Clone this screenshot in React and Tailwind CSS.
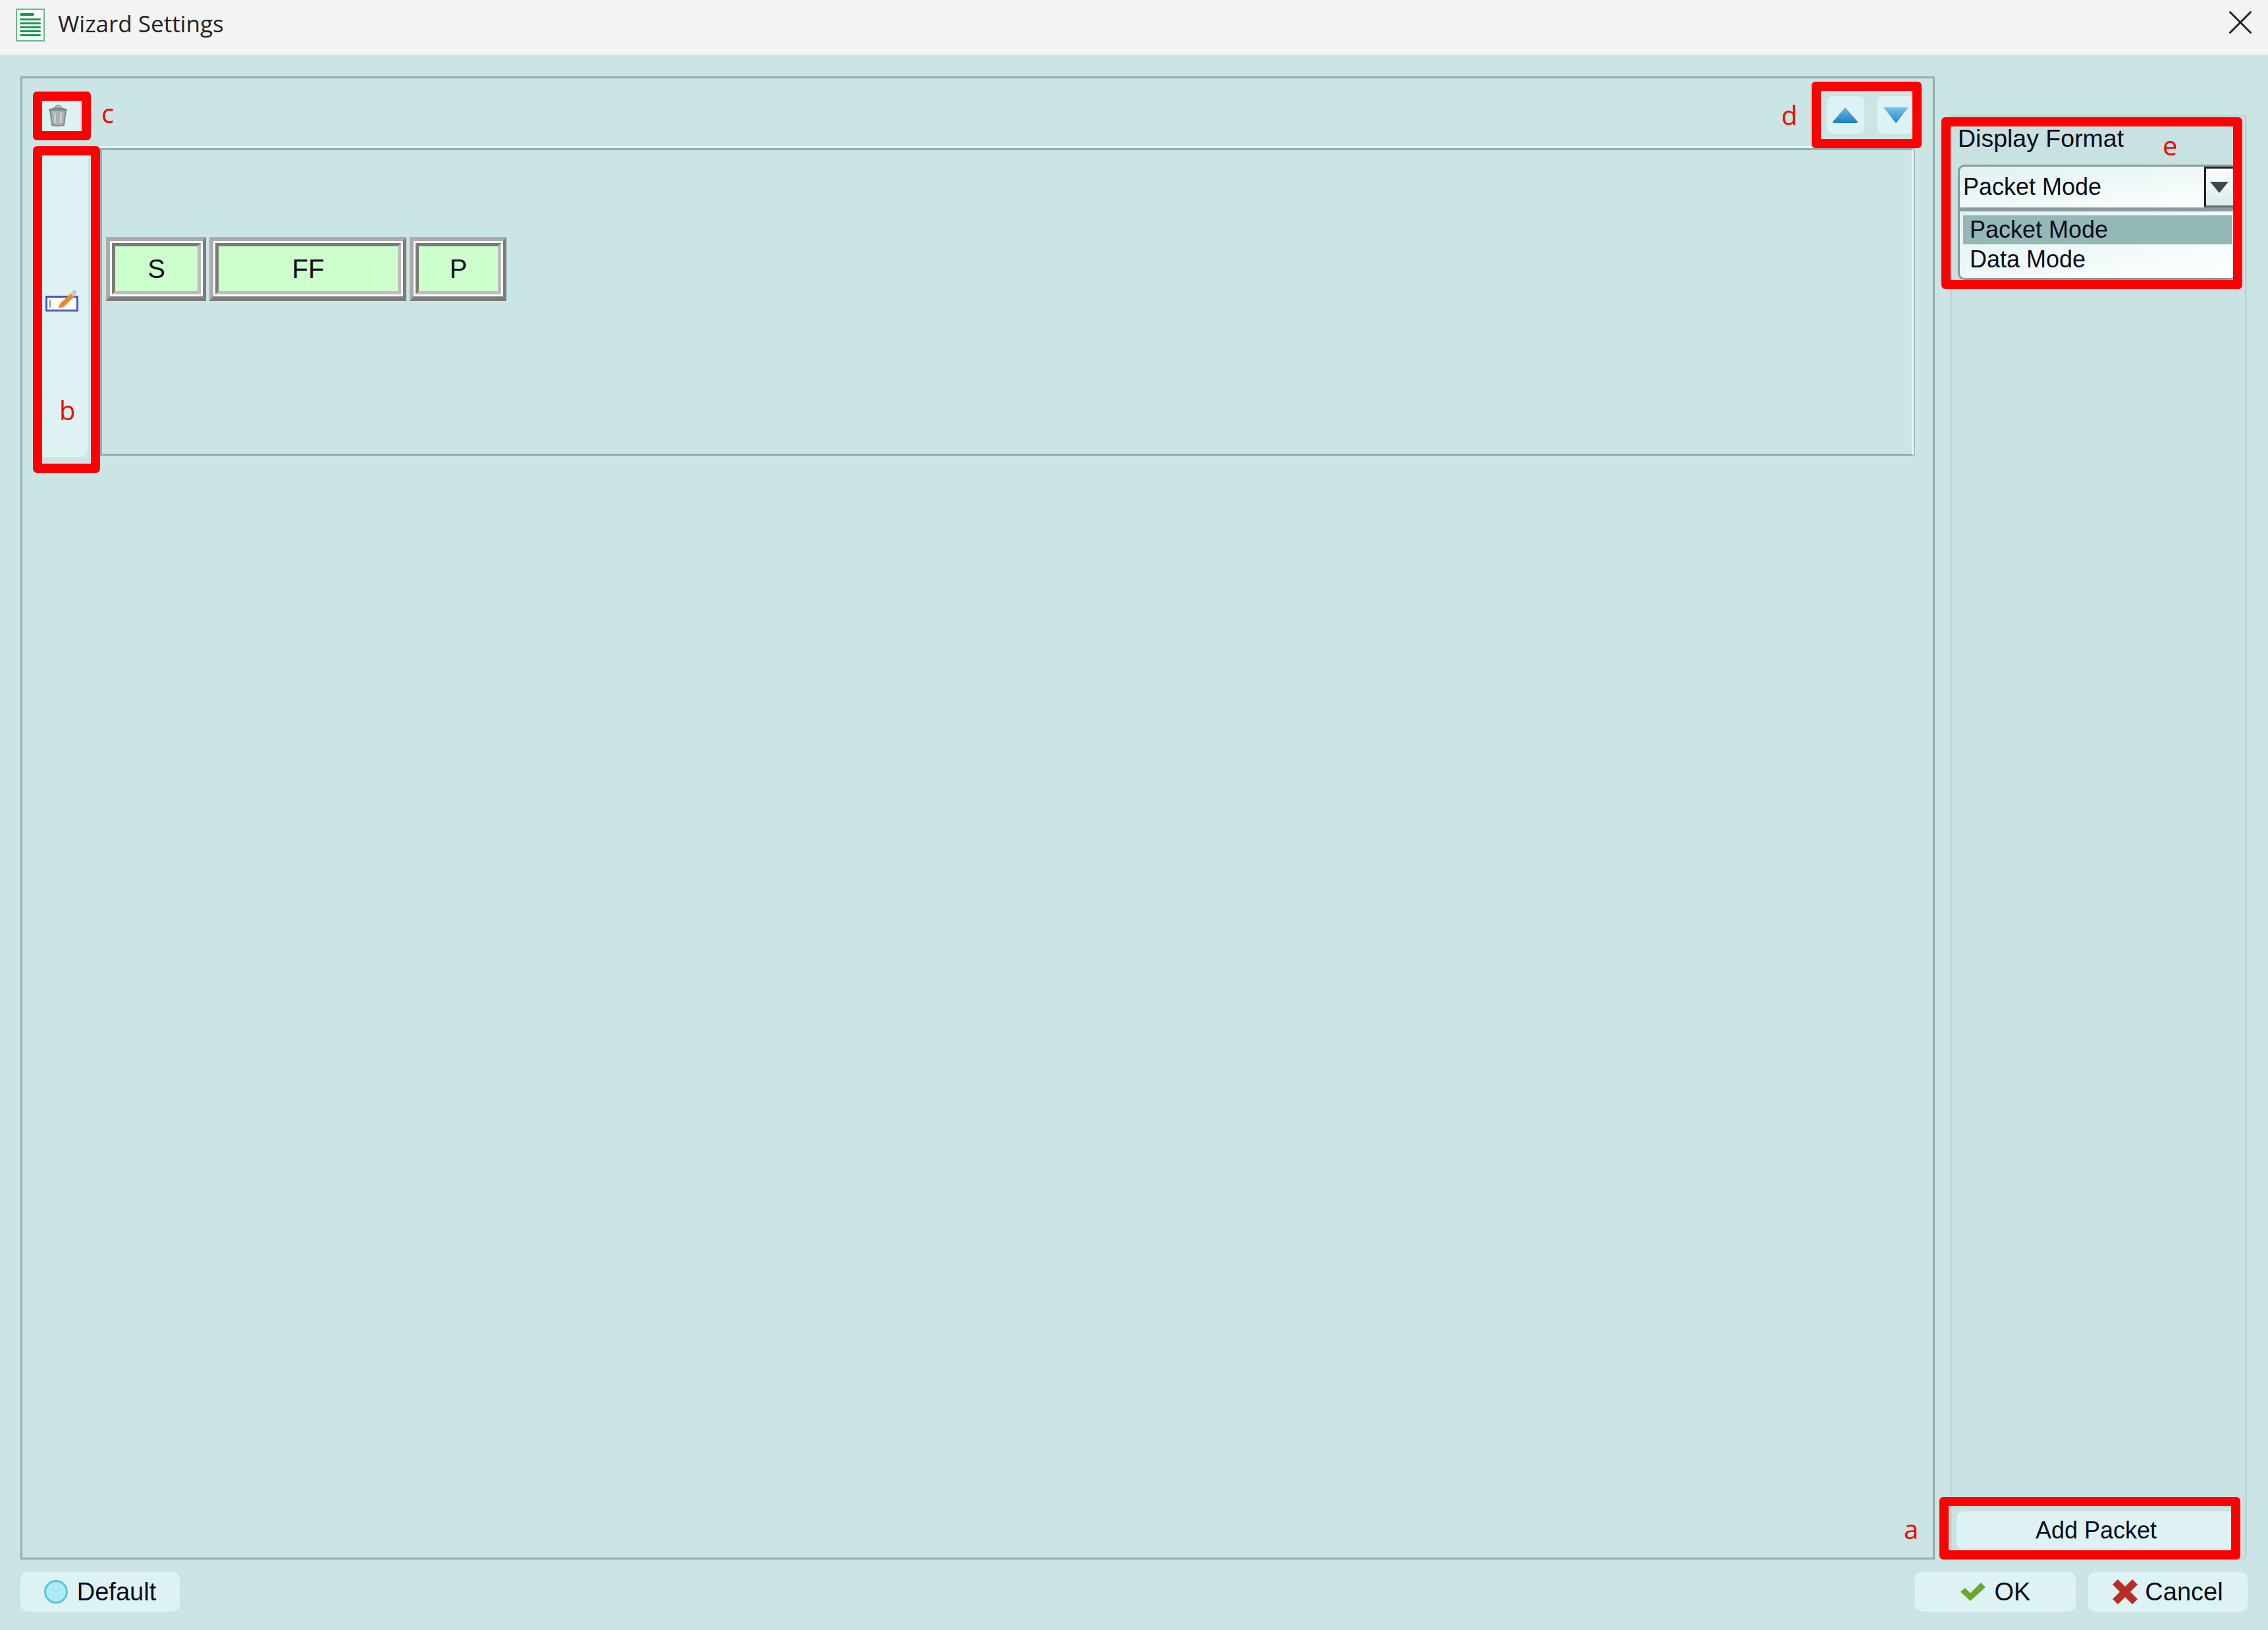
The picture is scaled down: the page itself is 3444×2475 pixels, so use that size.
import React from 'react';
import { X } from 'lucide-react';

const font = "font-['Liberation_Sans',Arial,sans-serif]";

// the app's flat pale button
const FlatButton = ({ className = '', children }) => (
  <div className={`flex items-center justify-center bg-[#def2f4] rounded-[10px] text-[#0b0b1a] ${className}`}>
    {children}
  </div>
);

const PacketCell = ({ label, width }) => (
  <div
    className="h-[97px] border-solid border-t-[6px] border-l-[6px] border-r-[5px] border-b-[7px] border-t-[#ababab] border-l-[#ababab] border-r-[#7d7d7d] border-b-[#7d7d7d]"
    style={{ width }}
  >
    <div className="h-full border-[3px] border-white">
      <div className="h-full flex items-center justify-center bg-[#ccffcc] border-[5px] border-t-[#7b7b7b] border-l-[#7b7b7b] border-r-[#bdbdbd] border-b-[#bdbdbd] text-[40px] text-[#0b0b1a]">
        {label}
      </div>
    </div>
  </div>
);

const Annotation = ({ className }) => (
  <div className={`absolute border-[14px] border-[#ff0000] rounded-[6px] ${className}`} />
);

const Letter = ({ className, children }) => (
  <span className={`absolute font-['Open_Sans',sans-serif] text-[40px] leading-none text-[#ff0000] ${className}`}>
    {children}
  </span>
);

const App = () => {
  return (
    <div className={`relative w-[3444px] h-[2475px] overflow-hidden flex flex-col bg-[#cbe5e5] ${font}`}>
      {/* title bar */}
      <div className="h-[83px] shrink-0 bg-[#f3f3f3] flex items-center pl-[24px] pr-[11px]">
        <svg width="44" height="50" viewBox="0 0 44 50" className="mb-[8px]">
          <rect x="1" y="1" width="42" height="48" fill="#fff" stroke="#62bd85" strokeWidth="2" />
          <rect x="6" y="7" width="22" height="4" rx="2" fill="#109a48" />
          <rect x="6" y="15" width="32" height="3" rx="1.5" fill="#109a48" />
          <rect x="6" y="21" width="32" height="3" rx="1.5" fill="#109a48" />
          <rect x="6" y="27" width="32" height="3" rx="1.5" fill="#109a48" />
          <rect x="6" y="33" width="32" height="3" rx="1.5" fill="#109a48" />
          <rect x="6" y="39" width="32" height="3" rx="1.5" fill="#109a48" />
        </svg>
        <span className="ml-[20px] mb-[10px] font-['Open_Sans',sans-serif] text-[35px] text-[#222]">Wizard Settings</span>
        <X className="ml-auto mb-[16px]" size={62} strokeWidth={3} color="#222" absoluteStrokeWidth />
      </div>

      <div className="flex-1 flex flex-col px-[31px]">
        <div className="flex mt-[33px] h-[2252px] gap-[23px]">
          {/* packet editor */}
          <div className="w-[2907px] border-[3px] border-[#93aeae] pl-[18px] pr-[18px] pt-[27px] flex flex-col">
            <div className="h-[57px] flex justify-between shrink-0">
              <FlatButton className="ml-[2px] w-[68px] h-full">
                <svg width="32" height="34" viewBox="0 0 32 34">
                  <path d="M4 9 L28 9 L25 32 Q16 34 7 32 Z" fill="#a9b0b2" stroke="#7f8a8e" strokeWidth="2" />
                  <path d="M2 8 Q16 1 30 8 L30 10 L2 10 Z" fill="#7f8a8e" />
                  <path d="M12 4 Q16 0 21 4" fill="none" stroke="#8d979a" strokeWidth="2" />
                  <path d="M11 13 L12 29 M21 13 L20 29" stroke="#c9cfd0" strokeWidth="3" />
                </svg>
              </FlatButton>
              <div className="flex gap-[19px] mr-[10px]">
                <FlatButton className="w-[57px] h-full">
                  <svg width="38" height="24" viewBox="0 0 38 24" className="mr-[2px]">
                    <defs>
                      <linearGradient id="upArrow" x1="0" y1="0" x2="0" y2="1">
                        <stop offset="0" stopColor="#6dbbe2" />
                        <stop offset="1" stopColor="#1a7fc2" />
                      </linearGradient>
                    </defs>
                    <path d="M19 0 L38 22 Q38 24 36 24 L2 24 Q0 24 0 22 Z" fill="url(#upArrow)" />
                  </svg>
                </FlatButton>
                <FlatButton className="w-[57px] h-full">
                  <svg width="38" height="24" viewBox="0 0 38 24">
                    <defs>
                      <linearGradient id="downArrow" x1="0" y1="0" x2="0" y2="1">
                        <stop offset="0" stopColor="#7cc6e6" />
                        <stop offset="1" stopColor="#1d86c6" />
                      </linearGradient>
                    </defs>
                    <path d="M0 0 L38 0 L19 24 Z" fill="url(#downArrow)" />
                  </svg>
                </FlatButton>
              </div>
            </div>

            <div className="flex gap-[19px] mt-[19px] items-start">
              <FlatButton className="w-[81px] h-[466px] mt-[6px] shrink-0">
                <svg width="50" height="34" viewBox="0 0 50 34" className="mt-[-10px] mr-[-2px]">
                  <rect x="1.5" y="11.5" width="47" height="21" fill="#fff" stroke="#4a58b5" strokeWidth="3" />
                  <path d="M7 17 L7 28" stroke="#8b8b8b" strokeWidth="2" />
                  <path d="M19 29 L23 21 L38 7 L43 12 L28 27 Z" fill="#ee8a24" />
                  <path d="M38 7 L42 2 L47 1 L47 6 L43 12 Z" fill="#c3c8cc" />
                </svg>
              </FlatButton>
              <div className="shrink-0 w-[2754px] h-[467px] mt-[3px] border-[3px] border-[#93aeae] border-r-[#e6f4f4] shadow-[0_-3px_0_#e6f4f4,2px_0_0_#a3bbbb] pl-[6px] pt-[132px]">
                <div className="flex gap-[5px]">
                  <PacketCell label="S" width={152} />
                  <PacketCell label="FF" width={299} />
                  <PacketCell label="P" width={147} />
                </div>
              </div>
            </div>
          </div>

          {/* display format side panel */}
          <div className="w-[451px] mt-[58px] border-[3px] border-[#bfd6d6] rounded-[6px] bg-[#c8e1e1] pl-[9px] pr-[12px] pt-[13px] pb-[12px] flex flex-col text-[36px] text-[#0b0b1a]">
            <div className="leading-[40px] text-[37.5px]">Display Format</div>
            <div className="relative mt-[20px] h-[68px] border-[3px] border-[#8b9a9a] rounded-t-[10px] bg-gradient-to-br from-[#dff2f2] to-white flex items-center pl-[5px]">
              Packet Mode
              <div className="absolute right-[-3px] top-0 w-[50px] h-[62px] border-[3px] border-[#222] border-b-[#666] bg-gradient-to-b from-white to-[#d8ecec] flex items-center justify-center">
                <svg width="28" height="17" viewBox="0 0 28 17" className="mr-[4px]">
                  <path d="M0 0 L28 0 L14 17 Z" fill="#3d4a4c" />
                </svg>
              </div>
            </div>
            <div className="h-[107px] border-[3px] border-[#8b9a9a] rounded-b-[10px] bg-gradient-to-br from-[#dff2f2] to-white pl-[5px] pr-[5px] pt-[6px]">
              <div className="h-[44px] bg-[#93b8b6] pl-[10px] flex items-center">Packet Mode</div>
              <div className="h-[46px] pl-[10px] flex items-center">Data Mode</div>
            </div>
            <FlatButton className="mt-auto -ml-[2px] h-[58px] w-[424px]">Add Packet</FlatButton>
          </div>
        </div>

        {/* footer buttons */}
        <div className="flex mt-[19px] h-[60px] text-[38px]">
          <FlatButton className="w-[242px] h-full gap-[14px]">
            <span className="block w-[36px] h-[36px] rounded-full bg-[#aeeaf8] border-[3px] border-[#5cc4dc]" />
            Default
          </FlatButton>
          <FlatButton className="ml-auto w-[244px] h-full gap-[14px]">
            <svg width="38" height="28" viewBox="0 0 38 28">
              <path d="M0 14 L7 8 L15 16 L31 0 L38 7 L15 28 Z" fill="#6aa92e" />
            </svg>
            OK
          </FlatButton>
          <FlatButton className="ml-[19px] w-[242px] h-full gap-[11px]">
            <svg width="38" height="38" viewBox="0 0 38 38">
              <path d="M0 8 L8 0 L19 11 L30 0 L38 8 L27 19 L38 30 L30 38 L19 27 L8 38 L0 30 L11 19 Z" fill="#b92d28" />
            </svg>
            Cancel
          </FlatButton>
        </div>
      </div>

      {/* red callouts drawn over the screenshot */}
      <Annotation className="left-[50px] top-[139px] w-[88px] h-[74px]" />
      <Annotation className="left-[50px] top-[222px] w-[102px] h-[496px]" />
      <Annotation className="left-[2751px] top-[124px] w-[167px] h-[101px]" />
      <Annotation className="left-[2948px] top-[178px] w-[457px] h-[261px]" />
      <Annotation className="left-[2945px] top-[2273px] w-[457px] h-[95px]" />
      <Letter className="left-[154px] top-[152px]">c</Letter>
      <Letter className="left-[90px] top-[603px]">b</Letter>
      <Letter className="left-[2705px] top-[155px]">d</Letter>
      <Letter className="left-[3284px] top-[201px]">e</Letter>
      <Letter className="left-[2891px] top-[2302px]">a</Letter>
    </div>
  );
};

export default App;
